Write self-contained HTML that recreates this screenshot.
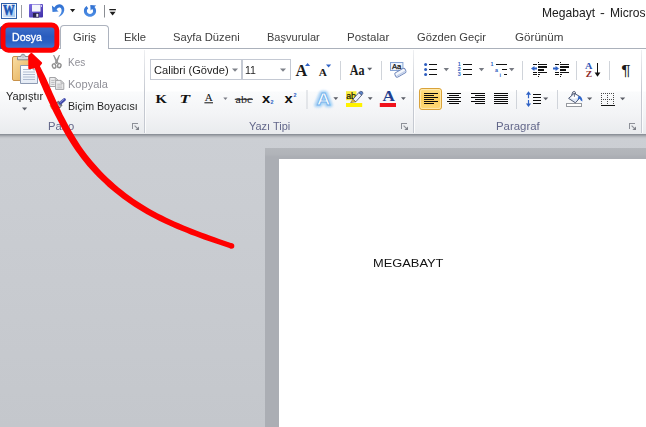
<!DOCTYPE html>
<html lang="tr">
<head>
<meta charset="utf-8">
<title>Megabayt - Microsoft Word</title>
<style>
html,body{margin:0;padding:0;}
body{width:646px;height:427px;overflow:hidden;position:relative;background:#ffffff;font-family:"Liberation Sans",sans-serif;}
.abs{position:absolute;}
.t{position:absolute;white-space:pre;transform-origin:0 50%;}
#ribbon{position:absolute;left:0;top:48px;width:646px;height:86px;background:linear-gradient(#ffffff 0%,#ffffff 49%,#fafbfc 51%,#f3f4f6 75%,#e9ebee 100%);border-top:1px solid #abb1bb;box-sizing:border-box;}
#doc{position:absolute;left:0;top:134px;width:646px;height:293px;background:linear-gradient(#cccfd4,#c4c7cc);}
#docline{position:absolute;left:0;top:134px;width:646px;height:5px;background:linear-gradient(#8c9199 0,#8c9199 1px,#a1a5ab 1px,#a1a5ab 2px,#b4b7bd 2px,#b4b7bd 3px,#c2c5ca 3px,#c2c5ca 4px,#c9ccd1 4px);}
#frame{position:absolute;left:265px;top:148px;width:381px;height:279px;background:linear-gradient(#b4b7bc,#b1b4b9 6px,#abaeb4 9px,#abaeb4);}
#page{position:absolute;left:279px;top:159px;width:367px;height:268px;background:#ffffff;}
.vsep{position:absolute;width:1px;background:#d4d8de;}
.gsep{position:absolute;width:1px;top:50px;height:83px;background:linear-gradient(rgba(200,204,212,0.3),#c5c9d1 50%,#c5c9d1);}
.combo{position:absolute;box-sizing:border-box;border:1px solid #c4c9d3;background:#fff;}
</style>
</head>
<body>
<!-- document area -->
<div id="doc"></div>
<div id="docline"></div>
<div id="frame"></div>
<div id="page"></div>

<!-- ribbon -->
<div id="ribbon"></div>
<div class="gsep" style="left:144px"></div>
<div class="gsep" style="left:145px;background:rgba(255,255,255,.8)"></div>
<div class="gsep" style="left:413px"></div>
<div class="gsep" style="left:414px;background:rgba(255,255,255,.8)"></div>
<div class="gsep" style="left:641px"></div>
<div class="gsep" style="left:642px;background:rgba(255,255,255,.8)"></div>

<!-- tabs -->
<div class="abs" style="left:0px;top:26px;width:57px;height:23px;box-sizing:border-box;border:1px solid #1f4da6;background:linear-gradient(#3d6ec8,#2a5cbe 45%,#2b60c4 72%,#3a74d4);border-radius:2px 2px 0 0;"></div>
<div class="abs" style="left:60px;top:25px;width:49px;height:24px;box-sizing:border-box;border:1px solid #adb3be;border-bottom:none;border-radius:4px 4px 0 0;background:#fff;"></div>

<!-- combos -->
<div class="combo" style="left:150px;top:59px;width:92px;height:21px;"></div>
<div class="combo" style="left:242px;top:59px;width:49px;height:21px;"></div>

<!-- quick access toolbar -->
<svg class="abs" style="left:0;top:0" width="130" height="22" viewBox="0 0 130 22">
  <defs>
    <linearGradient id="wg" x1="0" y1="0" x2="1" y2="1"><stop offset="0" stop-color="#ffffff"/><stop offset="1" stop-color="#9cc3f0"/></linearGradient>
    <linearGradient id="sv" x1="0" y1="0" x2="1" y2="1"><stop offset="0" stop-color="#7a6be0"/><stop offset="1" stop-color="#3f2fa8"/></linearGradient>
    <linearGradient id="ub" x1="0" y1="0" x2="0" y2="1"><stop offset="0" stop-color="#2f6fd0"/><stop offset="1" stop-color="#4f8fe6"/></linearGradient>
  </defs>
  <!-- word icon -->
  <rect x="1.5" y="3.5" width="15" height="15" fill="url(#wg)" stroke="#2f5fa8" stroke-width="1"/>
  <rect x="2.5" y="4.5" width="13" height="13" fill="none" stroke="#ffffff" stroke-width="1" opacity=".8"/>
  <text x="9.3" y="15.8" font-family="'Liberation Serif',serif" font-weight="bold" font-size="14" fill="#9cc0ee" text-anchor="middle" textLength="12" lengthAdjust="spacingAndGlyphs">W</text>
  <text x="8.8" y="15.4" font-family="'Liberation Serif',serif" font-weight="bold" font-size="14" fill="#1c56b4" stroke="#1c56b4" stroke-width="0.5" text-anchor="middle" textLength="11.6" lengthAdjust="spacingAndGlyphs">W</text>
  <rect x="21" y="5" width="1" height="13" fill="#9a9da3"/>
  <!-- save -->
  <rect x="29" y="4" width="14" height="13.5" rx="1" fill="url(#sv)"/>
  <rect x="32" y="4.6" width="8.5" height="7" fill="#f4f6fb"/>
  <rect x="41" y="5" width="1" height="2" fill="#c9c3f5"/>
  <rect x="33" y="13" width="6" height="4.5" fill="#2a2350"/>
  <rect x="36.3" y="13.8" width="2" height="3" fill="#e8e8f0"/>
  <!-- undo -->
  <path d="M51.9,5.6 L52.5,12.1 L58.6,11.5 L56.6,9.7 C57.4,8 58.6,7.2 59.8,7.5 C61.3,7.9 61.9,9.6 61.5,11.6 C61.1,13.5 59.9,15.2 58.4,16.9 C60.6,16.2 62.6,14.8 63.6,12.6 C64.9,9.8 64.4,6.4 62,4.9 C59.6,3.5 56.4,4.4 54.3,7.4 Z" fill="url(#ub)"/>
  <path d="M70,9 h5.2 l-2.6,3.2 z" fill="#1e1e1e"/>
  <!-- redo -->
  <path d="M90,16.8 C86.6,16.8 83.9,14.2 83.9,11 C83.9,8.8 85,7.1 86.6,6.1 L88.2,8.6 C87.4,9.1 86.9,10 86.9,11 C86.9,12.6 88.3,13.9 90,13.9 C91.7,13.9 93.1,12.6 93.1,11 C93.1,10.2 92.8,9.5 92.2,9 L90.6,10.4 L90.3,5 L96.2,5.6 L94.4,7.1 C95.5,8.1 96.1,9.5 96.1,11 C96.1,14.2 93.4,16.8 90,16.8 Z" fill="url(#ub)"/>
  <rect x="104" y="5" width="1" height="12.5" fill="#8a8d93"/>
  <rect x="109.3" y="9" width="6.6" height="1.3" fill="#1e1e1e"/>
  <path d="M109.6,11.8 h6 l-3,3.6 z" fill="#1e1e1e"/>
</svg>
<!-- clipboard group icons -->
<svg class="abs" style="left:0;top:48px" width="146" height="86" viewBox="0 48 146 86">
  <defs>
    <linearGradient id="cb" x1="0" y1="0" x2="1" y2="1"><stop offset="0" stop-color="#f9dfa6"/><stop offset="1" stop-color="#e3a94f"/></linearGradient>
    <linearGradient id="pp" x1="0" y1="0" x2="0" y2="1"><stop offset="0" stop-color="#ffffff"/><stop offset="1" stop-color="#e4ebf5"/></linearGradient>
  </defs>
  <!-- paste -->
  <rect x="12.5" y="56.5" width="21" height="24" rx="1.5" fill="url(#cb)" stroke="#c9924a" stroke-width="1"/>
  <path d="M17.5,59.8 v-2.3 q0,-1 1,-1 h2.2 q0.3,-2.3 2.3,-2.3 q2,0 2.3,2.3 h2.2 q1,0 1,1 v2.3 z" fill="#d9dce2" stroke="#7d828c" stroke-width="0.9"/>
  <circle cx="23" cy="56.4" r="0.9" fill="#ffffff" stroke="#7d828c" stroke-width="0.5"/>
  <path d="M20.5,65.5 h12.7 l4.3,4.3 v13.7 h-17 z" fill="url(#pp)" stroke="#8e9bb3" stroke-width="1"/>
  <path d="M33.2,65.5 v4.3 h4.3" fill="#dfe6f1" stroke="#8e9bb3" stroke-width="0.8"/>
  <g stroke="#a9b6cc" stroke-width="0.9"><path d="M23,69.5h8M23,72h12M23,74.5h12M23,77h12M23,79.5h12"/></g>
  <path d="M22,107.4 h5.2 l-2.6,3 z" fill="#5a5d66"/>
  <!-- scissors (disabled) -->
  <g fill="#969696">
    <path d="M53.1,55 L54.1,55 L58.7,63 L56.4,64 Z"/>
    <path d="M60,55 L59,55 L54.6,63 L56.9,64 Z"/>
  </g>
  <g fill="#fbfbfb" stroke="#8f8f8f" stroke-width="1.4">
    <ellipse cx="54.1" cy="66" rx="1.7" ry="2.2" transform="rotate(-15 54.1 66)"/>
    <ellipse cx="59.3" cy="65.6" rx="1.7" ry="2.1" transform="rotate(15 59.3 65.6)"/>
  </g>
  <!-- copy (disabled) -->
  <g fill="#eeeeef" stroke="#a3a3a6" stroke-width="1">
    <path d="M49.7,77.5 h5.6 l2.8,2.8 v6.2 h-8.4 z"/>
    <path d="M55.6,80.4 h5.4 l2.8,2.8 v6.2 h-8.2 z"/>
  </g>
  <path d="M55.3,77.5 v2.8 h2.8 M61,80.4 v2.8 h2.8" fill="none" stroke="#a3a3a6" stroke-width="0.8"/>
  <g stroke="#b4b4b8" stroke-width="0.9"><path d="M51.2,80.4h3.4M51.2,82.4h3.4M51.2,84.4h3.4M57.2,84.2h5M57.2,86h5M57.2,87.8h5"/></g>
  <!-- format painter -->
  <g>
    <path d="M50,105.4 L55.6,103.2 L59.6,108 L56.4,110.4 L51.6,108.6 Z" fill="#f1cd55" stroke="#b98e2c" stroke-width="0.6"/>
    <path d="M55.6,103.2 L58.6,101.2 L62,105.2 L59.6,108 Z" fill="#7d828e" stroke="#3d4048" stroke-width="0.7"/>
    <path d="M56.9,103.4 L60.3,107" stroke="#e6e8ee" stroke-width="0.8"/>
    <path d="M60.4,103 L64.4,99.6" stroke="#3f48a8" stroke-width="3" stroke-linecap="round"/>
    <path d="M60.2,102.4 L64,99.2" stroke="#8e96e0" stroke-width="0.9" stroke-linecap="round"/>
  </g>
  <!-- dialog launcher -->
  <g shape-rendering="crispEdges" fill="#8d9098"><rect x="132" y="123" width="6" height="1"/><rect x="132" y="123" width="1" height="6"/></g>
  <path d="M134.6,125.6 L137.6,128.6" stroke="#8d9098" stroke-width="1.1"/>
  <path d="M139,126.4 V130 H135.4 Z" fill="#7d8088"/>
</svg>
<!-- font group icons -->
<svg class="abs" style="left:146px;top:50px" width="267" height="84" viewBox="146 50 267 84">
  <defs>
    <filter id="blr" x="-40%" y="-40%" width="180%" height="180%"><feGaussianBlur stdDeviation="0.9"/></filter><radialGradient id="glow" cx="50%" cy="55%" r="55%"><stop offset="0" stop-color="#6fb4f2" stop-opacity=".9"/><stop offset="0.7" stop-color="#8cc6f7" stop-opacity=".6"/><stop offset="1" stop-color="#b8dcfb" stop-opacity="0"/></radialGradient>
  </defs>
  <!-- combo arrows -->
  <path d="M232,68.4 h6 l-3,3.4 z" fill="#7e8189"/>
  <path d="M280,68.4 h6 l-3,3.4 z" fill="#7e8189"/>
  <!-- row 2 -->
  <text x="155.6" y="102.6" font-family="'Liberation Serif',serif" font-weight="bold" font-size="12.4" fill="#111" textLength="11.4" lengthAdjust="spacingAndGlyphs">K</text>
  <text x="179.6" y="102.6" font-family="'Liberation Serif',serif" font-weight="bold" font-style="italic" font-size="12.4" fill="#111" textLength="10.6" lengthAdjust="spacingAndGlyphs">T</text>
  <text x="204.7" y="100.8" font-family="'Liberation Serif',serif" font-size="10.6" fill="#111" textLength="8" lengthAdjust="spacingAndGlyphs">A</text>
  <rect x="204.4" y="102.3" width="8.6" height="1" fill="#111"/>
  <path d="M223.3,97.4 h4.2 l-2.1,2.6 z" fill="#7a7d86"/>
  <text x="235.6" y="102.6" font-family="'Liberation Serif',serif" font-size="11" fill="#222" textLength="16.6" lengthAdjust="spacingAndGlyphs">abc</text>
  <rect x="234.8" y="98.8" width="18.2" height="1" fill="#222"/>
  <text x="262" y="102.8" font-family="'Liberation Sans',sans-serif" font-weight="bold" font-size="13" fill="#111" textLength="8.2" lengthAdjust="spacingAndGlyphs">x</text>
  <text x="270.5" y="104.4" font-family="'Liberation Sans',sans-serif" font-weight="bold" font-size="5.4" fill="#2a5fc4">2</text>
  <text x="284.4" y="102.8" font-family="'Liberation Sans',sans-serif" font-weight="bold" font-size="13" fill="#111" textLength="8.2" lengthAdjust="spacingAndGlyphs">x</text>
  <text x="293.6" y="97" font-family="'Liberation Sans',sans-serif" font-weight="bold" font-size="5.4" fill="#2a5fc4">2</text>
  <!-- grow / shrink -->
  <text x="295.6" y="75.6" font-family="'Liberation Serif',serif" font-weight="bold" font-size="16.2" fill="#1a1a1a" textLength="11.8" lengthAdjust="spacingAndGlyphs">A</text>
  <path d="M305,66 l2.6,-3 l2.6,3 z" fill="#2f62c6"/>
  <text x="318.7" y="75.6" font-family="'Liberation Serif',serif" font-weight="bold" font-size="10.8" fill="#1a1a1a" textLength="8.2" lengthAdjust="spacingAndGlyphs">A</text>
  <path d="M326,64.6 h5.2 l-2.6,3 z" fill="#2f62c6"/>
  <rect x="340" y="61" width="1" height="19" fill="#d0d4da"/>
  <text x="349.8" y="74.8" font-family="'Liberation Serif',serif" font-weight="bold" font-size="13.6" fill="#1a1a1a" textLength="14.8" lengthAdjust="spacingAndGlyphs">Aa</text>
  <path d="M367.2,67.8 h5 l-2.5,2.8 z" fill="#5a5d66"/>
  <rect x="381" y="61" width="1" height="19" fill="#d0d4da"/>
  <!-- clear formatting -->
  <rect x="390.5" y="62.5" width="12.4" height="8" fill="#eef3fb" stroke="#86a3d4" stroke-width="1"/>
  <text x="392" y="69.4" font-family="'Liberation Sans',sans-serif" font-size="7.6" fill="#111" stroke="#111" stroke-width="0.25" textLength="9.4" lengthAdjust="spacingAndGlyphs">Aa</text>
  <g transform="rotate(-30 400.4 72.8)">
    <rect x="394.6" y="70.3" width="11.6" height="5" rx="1.8" fill="#f4f7fc" stroke="#6a82b8" stroke-width="0.9"/>
    <rect x="395.4" y="73.2" width="10" height="1.5" rx="0.7" fill="#c3d0ea"/>
  </g>
  <!-- row2 right -->
  <rect x="306.5" y="90" width="1" height="19" fill="#d0d4da"/>
  <text x="316.6" y="105" font-family="'Liberation Sans',sans-serif" font-weight="bold" font-size="17" fill="#9ccdf6" stroke="#9ccdf6" stroke-width="4.6" stroke-linejoin="round" textLength="14" lengthAdjust="spacingAndGlyphs" filter="url(#blr)" opacity=".85">A</text>
  <text x="316.6" y="105" font-family="'Liberation Sans',sans-serif" font-weight="bold" font-size="17" fill="#ffffff" stroke="#74b3ec" stroke-width="0.8" textLength="14" lengthAdjust="spacingAndGlyphs">A</text>
  <path d="M333.4,97.2 h4.8 l-2.4,2.8 z" fill="#5a5d66"/>
  <!-- highlight -->
  <rect x="346" y="91.2" width="10.4" height="9" fill="#f8ee3c"/>
  <text x="346.2" y="98.6" font-family="'Liberation Sans',sans-serif" font-size="9.4" fill="#111" stroke="#111" stroke-width="0.2" textLength="9.8" lengthAdjust="spacingAndGlyphs">ab</text>
  <path d="M352.8,99.4 L358.8,92.6 L361.8,95 L355.8,101.8 Z" fill="#edf2fa" stroke="#3c4a6e" stroke-width="0.8" stroke-linejoin="round"/>
  <path d="M352.8,99.4 L355.8,101.8 L350.6,102.6 Z" fill="#f2c24a" stroke="#6e5a2a" stroke-width="0.6" stroke-linejoin="round"/>
  <path d="M358.8,92.6 Q360.8,90.4 362.4,91.8 Q363.8,93.2 361.8,95 Z" fill="#5b84cc" stroke="#3c4a6e" stroke-width="0.7"/>
  <rect x="346" y="103" width="16.2" height="4" fill="#fff200"/>
  <path d="M367.8,97.2 h4.8 l-2.4,2.8 z" fill="#5a5d66"/>
  <!-- font color -->
  <text x="382.4" y="101.4" font-family="'Liberation Serif',serif" font-weight="bold" font-size="14.8" fill="#1f3f8f" textLength="12.4" lengthAdjust="spacingAndGlyphs">A</text>
  <rect x="379.8" y="103" width="16.2" height="4" fill="#f0121c"/>
  <path d="M401,97.2 h4.8 l-2.4,2.8 z" fill="#5a5d66"/>
  <!-- dialog launcher -->
  <g shape-rendering="crispEdges" fill="#8d9098"><rect x="401" y="123" width="6" height="1"/><rect x="401" y="123" width="1" height="6"/></g>
  <path d="M403.6,125.6 L406.6,128.6" stroke="#8d9098" stroke-width="1.1"/>
  <path d="M408,126.4 V130 H404.4 Z" fill="#7d8088"/>
</svg>
<!-- paragraph group icons -->
<svg class="abs" style="left:415px;top:50px" width="231" height="84" viewBox="415 50 231 84">
  <defs>
    <linearGradient id="act" x1="0" y1="0" x2="0" y2="1"><stop offset="0" stop-color="#fddf8c"/><stop offset="0.45" stop-color="#fccf5e"/><stop offset="1" stop-color="#fdd978"/></linearGradient>
  </defs>
  <!-- bullets -->
  <g fill="#2f5fc0"><circle cx="425.6" cy="64.5" r="1.5"/><circle cx="425.6" cy="69.5" r="1.5"/><circle cx="425.6" cy="74.5" r="1.5"/></g>
  <g fill="#111" shape-rendering="crispEdges"><rect x="429" y="64" width="8" height="1"/><rect x="429" y="69" width="8" height="1"/><rect x="429" y="74" width="8" height="1"/></g>
  <path d="M443.6,68 h5.4 l-2.7,3.2 z" fill="#777a82"/>
  <!-- numbering -->
  <g font-family="'Liberation Sans',sans-serif" font-weight="bold" font-size="5.4" fill="#2f5fc0"><text x="457.8" y="66.4">1</text><text x="457.8" y="71.4">2</text><text x="457.8" y="76.4">3</text></g>
  <g fill="#111" shape-rendering="crispEdges"><rect x="463" y="64" width="9" height="1"/><rect x="463" y="69" width="9" height="1"/><rect x="463" y="74" width="9" height="1"/></g>
  <path d="M478.8,68 h5.4 l-2.7,3.2 z" fill="#777a82"/>
  <!-- multilevel -->
  <g font-family="'Liberation Sans',sans-serif" font-weight="bold" font-size="5.4" fill="#2f5fc0"><text x="490.6" y="66.4">1</text><text x="495" y="71.6">a</text><text x="499.6" y="77">i</text></g>
  <g fill="#111" shape-rendering="crispEdges"><rect x="496" y="64" width="11" height="1"/><rect x="502" y="69" width="5" height="1"/><rect x="504" y="74" width="3" height="1"/></g>
  <path d="M509,68 h5.4 l-2.7,3.2 z" fill="#777a82"/>
  <rect x="522" y="61" width="1" height="19" fill="#d0d4da"/>
  <!-- decrease indent -->
  <g fill="#111" shape-rendering="crispEdges">
    <rect x="533" y="64" width="4" height="1"/><rect x="538" y="64" width="9" height="1"/>
    <rect x="538" y="66" width="9" height="2"/><rect x="538" y="69" width="6" height="2"/>
    <rect x="533" y="72" width="4" height="1"/><rect x="538" y="72" width="9" height="1"/>
    <rect x="533" y="74" width="4" height="1"/><rect x="538" y="74" width="2" height="1"/>
    <rect x="538" y="62" width="1" height="1"/><rect x="538" y="76" width="1" height="1"/>
  </g>
  <path d="M531,68.5 l3.4,-2.6 v1.7 h2.6 v1.8 h-2.6 v1.7 z" fill="#2f62c6"/>
  <!-- increase indent -->
  <g fill="#111" shape-rendering="crispEdges">
    <rect x="555" y="64" width="4" height="1"/><rect x="560" y="64" width="9" height="1"/>
    <rect x="560" y="66" width="9" height="2"/><rect x="560" y="69" width="6" height="2"/>
    <rect x="555" y="72" width="4" height="1"/><rect x="560" y="72" width="9" height="1"/>
    <rect x="555" y="74" width="4" height="1"/><rect x="560" y="74" width="2" height="1"/>
    <rect x="560" y="62" width="1" height="1"/><rect x="560" y="76" width="1" height="1"/>
  </g>
  <path d="M559,68.5 l-3.4,-2.6 v1.7 h-2.6 v1.8 h2.6 v1.7 z" fill="#2f62c6"/>
  <rect x="576" y="61" width="1" height="19" fill="#d0d4da"/>
  <!-- sort -->
  <text x="585" y="69.2" font-family="'Liberation Serif',serif" font-weight="bold" font-size="8.8" fill="#2f55b5" textLength="7.4" lengthAdjust="spacingAndGlyphs">A</text>
  <text x="585.8" y="76.8" font-family="'Liberation Serif',serif" font-weight="bold" font-size="9.2" fill="#8c2a2a" textLength="6.4" lengthAdjust="spacingAndGlyphs">Z</text>
  <rect x="597" y="63" width="1" height="11" fill="#111" shape-rendering="crispEdges"/>
  <path d="M594.6,72.6 h5.8 l-2.9,4.2 z" fill="#111"/>
  <rect x="609" y="61" width="1" height="19" fill="#d0d4da"/>
  <!-- pilcrow -->
  <text x="621.2" y="75.2" font-family="'Liberation Sans',sans-serif" font-size="14.8" fill="#1a1a1a" textLength="9.4" lengthAdjust="spacingAndGlyphs">¶</text>
  <!-- align buttons -->
  <rect x="419.5" y="88.5" width="22" height="21" rx="2.5" fill="url(#act)" stroke="#d9a23a" stroke-width="1"/>
  <rect x="420.5" y="89.5" width="20" height="19" rx="1.8" fill="none" stroke="#fff0c0" stroke-width="1" opacity=".7"/>
  <g fill="#0a0a0a" shape-rendering="crispEdges">
    <rect x="424" y="93" width="14" height="1"/><rect x="424" y="95" width="10" height="1"/><rect x="424" y="97" width="14" height="1"/><rect x="424" y="99" width="10" height="1"/><rect x="424" y="101" width="14" height="1"/><rect x="424" y="103" width="10" height="1"/>
    <rect x="447" y="93" width="14" height="1"/><rect x="449" y="95" width="10" height="1"/><rect x="447" y="97" width="14" height="1"/><rect x="449" y="99" width="10" height="1"/><rect x="447" y="101" width="14" height="1"/><rect x="449" y="103" width="10" height="1"/>
    <rect x="471" y="93" width="14" height="1"/><rect x="475" y="95" width="10" height="1"/><rect x="471" y="97" width="14" height="1"/><rect x="475" y="99" width="10" height="1"/><rect x="471" y="101" width="14" height="1"/><rect x="475" y="103" width="10" height="1"/>
    <rect x="494" y="93" width="14" height="1"/><rect x="494" y="95" width="14" height="1"/><rect x="494" y="97" width="14" height="1"/><rect x="494" y="99" width="14" height="1"/><rect x="494" y="101" width="14" height="1"/><rect x="494" y="103" width="14" height="1"/>
  </g>
  <rect x="516" y="90" width="1" height="19" fill="#d0d4da"/>
  <!-- line spacing -->
  <path d="M528.5,91.2 l2.6,3.6 h-2 v3.4 h-1.2 v-3.4 h-2 z M528.5,107 l2.6,-3.6 h-2 v-3.4 h-1.2 v3.4 h-2 z" fill="#2f62c6"/>
  <g fill="#0a0a0a" shape-rendering="crispEdges"><rect x="533" y="94" width="8" height="1"/><rect x="533" y="97" width="8" height="1"/><rect x="533" y="100" width="8" height="1"/><rect x="533" y="103" width="8" height="1"/></g>
  <path d="M543.2,97.4 h5 l-2.5,2.8 z" fill="#5a5d66"/>
  <rect x="557" y="90" width="1" height="19" fill="#d0d4da"/>
  <!-- shading -->
  <rect x="566.5" y="103.5" width="15" height="3" fill="#ffffff" stroke="#96999f" stroke-width="1"/>
  <path d="M571.6,95.2 Q572.6,90.6 574.6,91.4 Q576,92 575.4,94.6" fill="none" stroke="#3f4a66" stroke-width="0.9"/>
  <path d="M568.6,98.4 L574.2,93.2 L580.6,97 L575.4,102.8 Z" fill="#dfe8f6" stroke="#3f4a66" stroke-width="0.9" stroke-linejoin="round"/>
  <path d="M570.4,98.3 L574.4,94.6 L578.6,97.1 L574.6,98.8 Z" fill="#ffffff"/>
  <path d="M574.4,93.4 v3.4" stroke="#3f4a66" stroke-width="0.8"/>
  <path d="M578.4,96 Q582.6,96.4 582.4,101.4 Q580.6,101 579.6,98.6 L577.6,100.4 Z" fill="#2f66cc"/>
  <path d="M587,97.4 h5.2 l-2.6,2.8 z" fill="#5a5d66"/>
  <!-- borders -->
  <g fill="#4a4a4a" shape-rendering="crispEdges"><rect x="601" y="93" width="1" height="1"/><rect x="601" y="95" width="1" height="1"/><rect x="601" y="97" width="1" height="1"/><rect x="601" y="99" width="1" height="1"/><rect x="601" y="101" width="1" height="1"/><rect x="601" y="103" width="1" height="1"/><rect x="607" y="93" width="1" height="1"/><rect x="607" y="95" width="1" height="1"/><rect x="607" y="97" width="1" height="1"/><rect x="607" y="99" width="1" height="1"/><rect x="607" y="101" width="1" height="1"/><rect x="607" y="103" width="1" height="1"/><rect x="613" y="93" width="1" height="1"/><rect x="613" y="95" width="1" height="1"/><rect x="613" y="97" width="1" height="1"/><rect x="613" y="99" width="1" height="1"/><rect x="613" y="101" width="1" height="1"/><rect x="613" y="103" width="1" height="1"/><rect x="601" y="93" width="1" height="1"/><rect x="603" y="93" width="1" height="1"/><rect x="605" y="93" width="1" height="1"/><rect x="607" y="93" width="1" height="1"/><rect x="609" y="93" width="1" height="1"/><rect x="611" y="93" width="1" height="1"/><rect x="613" y="93" width="1" height="1"/><rect x="601" y="99" width="1" height="1"/><rect x="603" y="99" width="1" height="1"/><rect x="605" y="99" width="1" height="1"/><rect x="607" y="99" width="1" height="1"/><rect x="609" y="99" width="1" height="1"/><rect x="611" y="99" width="1" height="1"/><rect x="613" y="99" width="1" height="1"/></g>
  <rect x="601" y="105" width="14" height="1" fill="#111" shape-rendering="crispEdges"/>
  <path d="M620,97.4 h5.2 l-2.6,2.8 z" fill="#5a5d66"/>
  <!-- dialog launcher -->
  <g shape-rendering="crispEdges" fill="#8d9098"><rect x="629" y="123" width="6" height="1"/><rect x="629" y="123" width="1" height="6"/></g>
  <path d="M631.6,125.6 L634.6,128.6" stroke="#8d9098" stroke-width="1.1"/>
  <path d="M636,126.4 V130 H632.4 Z" fill="#7d8088"/>
</svg>

<span class="t" style="left:541.86px;top:7px;font-size:12.8px;line-height:12.8px;color:#1a1a1a;font-family:'Liberation Sans', sans-serif;transform:scaleX(0.9436);">Megabayt</span>
<span class="t" style="left:599.57px;top:7px;font-size:12.8px;line-height:12.8px;color:#1a1a1a;font-family:'Liberation Sans', sans-serif;transform:scaleX(1.1333);">-</span>
<span class="t" style="left:609.96px;top:7px;font-size:12.8px;line-height:12.8px;color:#1a1a1a;font-family:'Liberation Sans', sans-serif;transform:scaleX(0.9436);">Microsoft Word</span>
<span class="t" style="left:11.81px;top:32px;font-size:10.7px;line-height:10.7px;color:#ffffff;font-family:'Liberation Sans', sans-serif;transform:scaleX(0.9900);-webkit-text-stroke-width:0.35px;">Dosya</span>
<span class="t" style="left:73.00px;top:32px;font-size:10.7px;line-height:10.7px;color:#404040;font-family:'Liberation Sans', sans-serif;transform:scaleX(1.0455);">Giriş</span>
<span class="t" style="left:123.55px;top:32px;font-size:10.7px;line-height:10.7px;color:#404040;font-family:'Liberation Sans', sans-serif;transform:scaleX(1.0526);">Ekle</span>
<span class="t" style="left:172.55px;top:32px;font-size:10.7px;line-height:10.7px;color:#404040;font-family:'Liberation Sans', sans-serif;transform:scaleX(1.0484);">Sayfa Düzeni</span>
<span class="t" style="left:266.97px;top:32px;font-size:10.7px;line-height:10.7px;color:#404040;font-family:'Liberation Sans', sans-serif;transform:scaleX(1.0320);">Başvurular</span>
<span class="t" style="left:346.92px;top:32px;font-size:10.7px;line-height:10.7px;color:#404040;font-family:'Liberation Sans', sans-serif;transform:scaleX(1.0789);">Postalar</span>
<span class="t" style="left:417.00px;top:32px;font-size:10.7px;line-height:10.7px;color:#404040;font-family:'Liberation Sans', sans-serif;transform:scaleX(1.0455);">Gözden Geçir</span>
<span class="t" style="left:514.60px;top:32px;font-size:10.7px;line-height:10.7px;color:#404040;font-family:'Liberation Sans', sans-serif;transform:scaleX(1.0886);">Görünüm</span>
<span class="t" style="left:5.80px;top:91px;font-size:10.7px;line-height:10.7px;color:#1e1e1e;font-family:'Liberation Sans', sans-serif;transform:scaleX(1.0333);">Yapıştır</span>
<span class="t" style="left:67.83px;top:58px;font-size:10.3px;line-height:10.3px;color:#8f8f97;font-family:'Liberation Sans', sans-serif;transform:scaleX(0.9688);">Kes</span>
<span class="t" style="left:67.73px;top:80px;font-size:10.3px;line-height:10.3px;color:#8f8f97;font-family:'Liberation Sans', sans-serif;transform:scaleX(1.0722);">Kopyala</span>
<span class="t" style="left:67.77px;top:102px;font-size:10.3px;line-height:10.3px;color:#1e1e1e;font-family:'Liberation Sans', sans-serif;transform:scaleX(1.0333);">Biçim Boyacısı</span>
<span class="t" style="left:48.35px;top:121px;font-size:10.7px;line-height:10.7px;color:#63678a;font-family:'Liberation Sans', sans-serif;transform:scaleX(1.0500);">Pano</span>
<span class="t" style="left:249.00px;top:121px;font-size:10.7px;line-height:10.7px;color:#63678a;font-family:'Liberation Sans', sans-serif;transform:scaleX(1.0275);">Yazı Tipi</span>
<span class="t" style="left:496.33px;top:121px;font-size:10.7px;line-height:10.7px;color:#63678a;font-family:'Liberation Sans', sans-serif;transform:scaleX(1.0675);">Paragraf</span>
<span class="t" style="left:153.60px;top:65px;font-size:10.7px;line-height:10.7px;color:#1e1e1e;font-family:'Liberation Sans', sans-serif;transform:scaleX(1.0380);">Calibri (Gövde)</span>
<span class="t" style="left:245.21px;top:65px;font-size:10.7px;line-height:10.7px;color:#1e1e1e;font-family:'Liberation Sans', sans-serif;transform:scaleX(0.9900);">11</span>
<span class="t" style="left:372.81px;top:258px;font-size:11.8px;line-height:11.8px;color:#111111;font-family:'Liberation Sans', sans-serif;transform:scaleX(1.0891);">MEGABAYT</span>
<svg class="abs" style="left:0;top:0" width="646" height="427" viewBox="0 0 646 427">
<rect x="3" y="24.9" width="53.9" height="25.3" rx="5.5" ry="5.5" fill="none" stroke="#ff0000" stroke-width="5"/>
<path d="M33.7,65.1 L35.3,69.5 L36.9,73.9 L38.5,78.3 L40.2,82.8 L42.1,87.1 L44.0,91.4 L46.0,95.8 L48.0,100.2 L50.0,104.5 L52.0,108.9 L54.1,113.2 L56.3,117.5 L58.5,121.8 L60.8,126.1 L63.1,130.3 L65.5,134.5 L67.9,138.6 L70.5,142.7 L73.1,146.7 L75.8,150.7 L78.6,154.6 L81.5,158.4 L84.5,162.2 L87.5,165.9 L90.7,169.5 L93.9,173.0 L97.2,176.5 L100.6,179.8 L104.1,183.1 L107.6,186.4 L111.2,189.5 L114.9,192.6 L118.7,195.5 L122.5,198.4 L126.4,201.3 L130.3,204.0 L134.3,206.7 L138.4,209.3 L142.5,211.8 L146.7,214.2 L150.9,216.5 L155.2,218.8 L159.5,221.0 L163.8,223.1 L168.2,225.1 L172.6,227.1 L177.0,229.0 L181.5,230.8 L186.0,232.6 L190.4,234.4 L194.9,236.1 L199.4,237.8 L203.9,239.4 L208.4,241.0 L212.9,242.5 L217.4,244.1 L221.9,245.6 L226.3,247.0 L230.7,248.5 L232.5,243.4 L228.0,241.9 L223.6,240.4 L219.2,238.9 L214.7,237.3 L210.3,235.7 L205.8,234.1 L201.4,232.5 L196.9,230.8 L192.5,229.1 L188.1,227.3 L183.7,225.5 L179.3,223.6 L175.0,221.7 L170.7,219.8 L166.4,217.7 L162.1,215.6 L157.9,213.5 L153.8,211.2 L149.7,208.9 L145.6,206.5 L141.6,204.1 L137.7,201.5 L133.8,198.9 L130.0,196.2 L126.2,193.4 L122.5,190.6 L118.9,187.7 L115.4,184.7 L111.9,181.6 L108.5,178.5 L105.1,175.2 L101.9,171.9 L98.7,168.6 L95.6,165.1 L92.5,161.6 L89.6,158.0 L86.8,154.4 L84.0,150.7 L81.3,146.9 L78.7,143.0 L76.2,139.1 L73.8,135.1 L71.4,131.0 L69.1,126.9 L66.9,122.8 L64.7,118.6 L62.5,114.4 L60.5,110.1 L58.4,105.8 L56.4,101.5 L54.5,97.2 L52.5,92.9 L50.6,88.5 L48.7,84.2 L46.8,79.9 L44.7,75.6 L42.6,71.4 L40.5,67.2 L38.3,63.1 Z" fill="#ff0000"/>
<circle cx="231.6" cy="246.0" r="2.70" fill="#ff0000"/>
<path d="M31.3,53.8 L41.1,63 L38.2,66.6 L29.3,68.3 L29.3,56 Z" fill="#ff0000" stroke="#ff0000" stroke-width="2" stroke-linejoin="round"/>
</svg>
</body>
</html>
